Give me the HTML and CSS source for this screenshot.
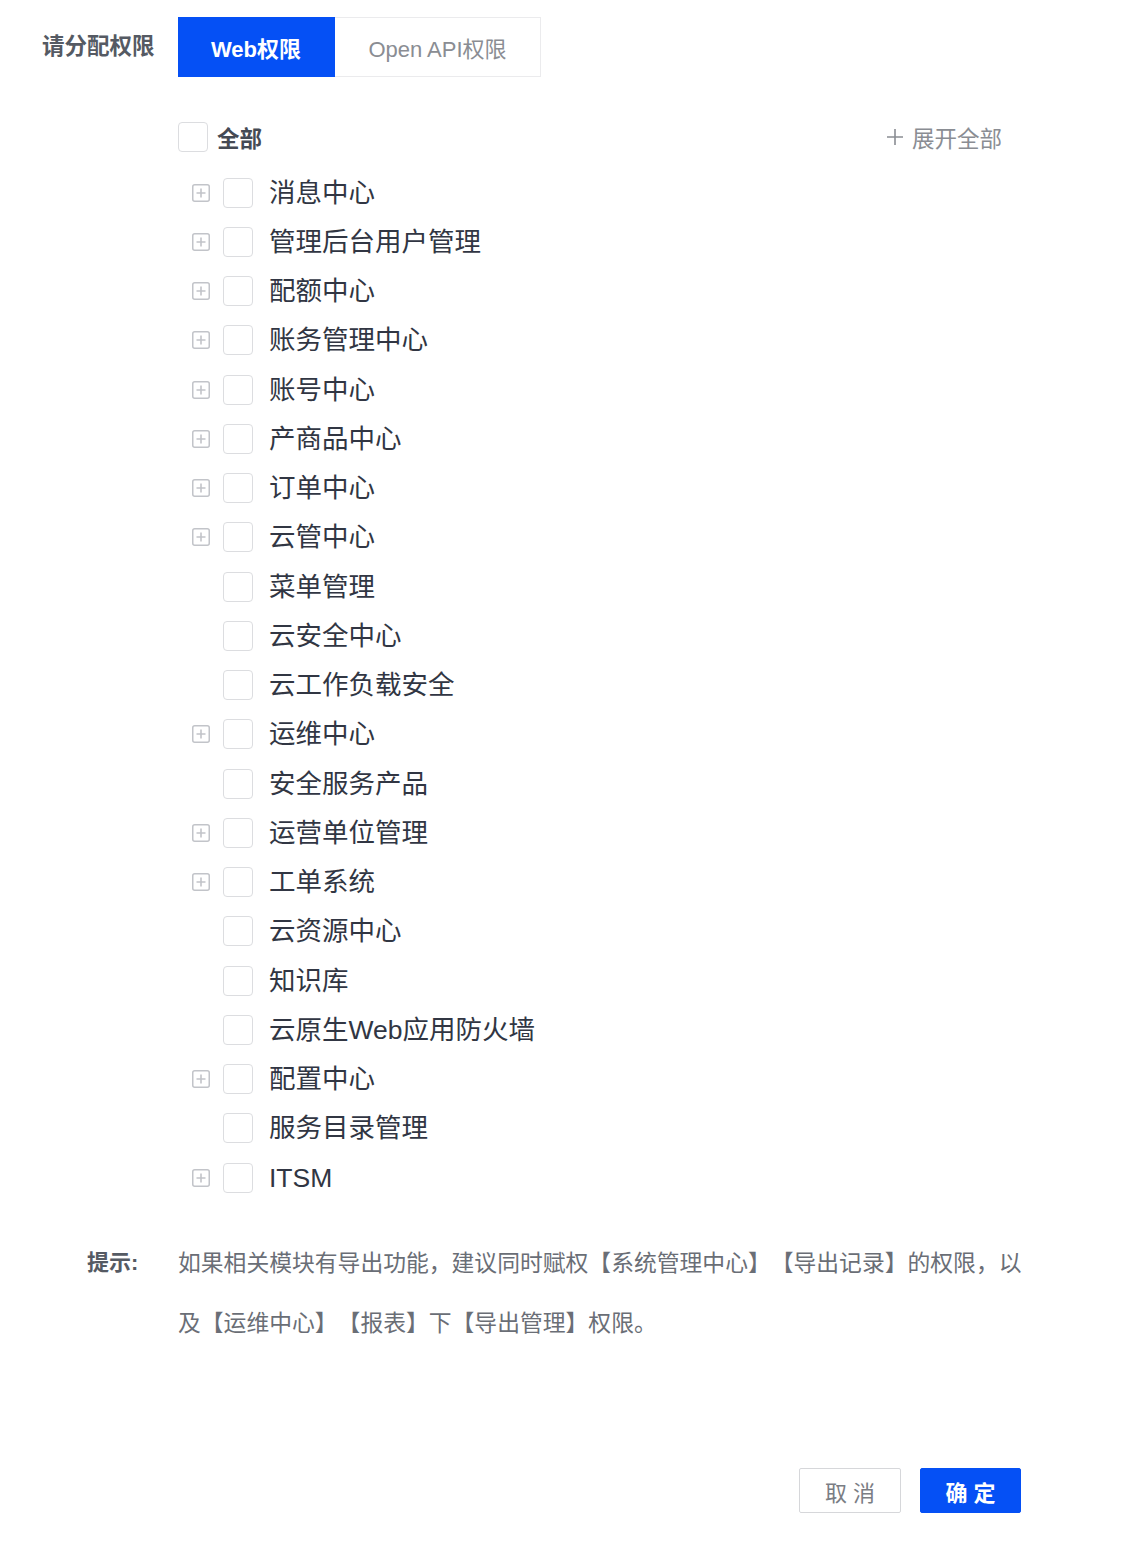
FILE: index.html
```html
<!DOCTYPE html>
<html lang="zh">
<head>
<meta charset="utf-8">
<link rel="stylesheet" href="styles.css">
</head>
<body>
<div class="page">
  <div class="head">
    <div class="head-label">请分配权限</div>
    <div class="tabs">
      <div class="tab active">Web权限</div>
      <div class="tab">Open API权限</div>
    </div>
  </div>

  <div class="tree">
    <div class="all-row">
      <div class="all-left"><span class="cb"></span><span class="all-text">全部</span></div>
      <div class="expand"><svg class="expand-plus" viewBox="0 0 18 18"><path d="M9 1v16M1 9h16" stroke="#8a8d93" stroke-width="1.6"/></svg>展开全部</div>
    </div>
    <div class="rows">
      <div class="row"><span class="pl"><svg viewBox="0 0 18 18"><rect x="0.75" y="0.75" width="16.5" height="16.5" rx="2" fill="none" stroke="#c2c4c9" stroke-width="1.5"/><path d="M9 4.5v9M4.5 9h9" stroke="#c2c4c9" stroke-width="1.6"/></svg></span><span class="cb"></span><span class="txt">消息中心</span></div>
      <div class="row"><span class="pl"><svg viewBox="0 0 18 18"><rect x="0.75" y="0.75" width="16.5" height="16.5" rx="2" fill="none" stroke="#c2c4c9" stroke-width="1.5"/><path d="M9 4.5v9M4.5 9h9" stroke="#c2c4c9" stroke-width="1.6"/></svg></span><span class="cb"></span><span class="txt">管理后台用户管理</span></div>
      <div class="row"><span class="pl"><svg viewBox="0 0 18 18"><rect x="0.75" y="0.75" width="16.5" height="16.5" rx="2" fill="none" stroke="#c2c4c9" stroke-width="1.5"/><path d="M9 4.5v9M4.5 9h9" stroke="#c2c4c9" stroke-width="1.6"/></svg></span><span class="cb"></span><span class="txt">配额中心</span></div>
      <div class="row"><span class="pl"><svg viewBox="0 0 18 18"><rect x="0.75" y="0.75" width="16.5" height="16.5" rx="2" fill="none" stroke="#c2c4c9" stroke-width="1.5"/><path d="M9 4.5v9M4.5 9h9" stroke="#c2c4c9" stroke-width="1.6"/></svg></span><span class="cb"></span><span class="txt">账务管理中心</span></div>
      <div class="row"><span class="pl"><svg viewBox="0 0 18 18"><rect x="0.75" y="0.75" width="16.5" height="16.5" rx="2" fill="none" stroke="#c2c4c9" stroke-width="1.5"/><path d="M9 4.5v9M4.5 9h9" stroke="#c2c4c9" stroke-width="1.6"/></svg></span><span class="cb"></span><span class="txt">账号中心</span></div>
      <div class="row"><span class="pl"><svg viewBox="0 0 18 18"><rect x="0.75" y="0.75" width="16.5" height="16.5" rx="2" fill="none" stroke="#c2c4c9" stroke-width="1.5"/><path d="M9 4.5v9M4.5 9h9" stroke="#c2c4c9" stroke-width="1.6"/></svg></span><span class="cb"></span><span class="txt">产商品中心</span></div>
      <div class="row"><span class="pl"><svg viewBox="0 0 18 18"><rect x="0.75" y="0.75" width="16.5" height="16.5" rx="2" fill="none" stroke="#c2c4c9" stroke-width="1.5"/><path d="M9 4.5v9M4.5 9h9" stroke="#c2c4c9" stroke-width="1.6"/></svg></span><span class="cb"></span><span class="txt">订单中心</span></div>
      <div class="row"><span class="pl"><svg viewBox="0 0 18 18"><rect x="0.75" y="0.75" width="16.5" height="16.5" rx="2" fill="none" stroke="#c2c4c9" stroke-width="1.5"/><path d="M9 4.5v9M4.5 9h9" stroke="#c2c4c9" stroke-width="1.6"/></svg></span><span class="cb"></span><span class="txt">云管中心</span></div>
      <div class="row"><span class="pl"></span><span class="cb"></span><span class="txt">菜单管理</span></div>
      <div class="row"><span class="pl"></span><span class="cb"></span><span class="txt">云安全中心</span></div>
      <div class="row"><span class="pl"></span><span class="cb"></span><span class="txt">云工作负载安全</span></div>
      <div class="row"><span class="pl"><svg viewBox="0 0 18 18"><rect x="0.75" y="0.75" width="16.5" height="16.5" rx="2" fill="none" stroke="#c2c4c9" stroke-width="1.5"/><path d="M9 4.5v9M4.5 9h9" stroke="#c2c4c9" stroke-width="1.6"/></svg></span><span class="cb"></span><span class="txt">运维中心</span></div>
      <div class="row"><span class="pl"></span><span class="cb"></span><span class="txt">安全服务产品</span></div>
      <div class="row"><span class="pl"><svg viewBox="0 0 18 18"><rect x="0.75" y="0.75" width="16.5" height="16.5" rx="2" fill="none" stroke="#c2c4c9" stroke-width="1.5"/><path d="M9 4.5v9M4.5 9h9" stroke="#c2c4c9" stroke-width="1.6"/></svg></span><span class="cb"></span><span class="txt">运营单位管理</span></div>
      <div class="row"><span class="pl"><svg viewBox="0 0 18 18"><rect x="0.75" y="0.75" width="16.5" height="16.5" rx="2" fill="none" stroke="#c2c4c9" stroke-width="1.5"/><path d="M9 4.5v9M4.5 9h9" stroke="#c2c4c9" stroke-width="1.6"/></svg></span><span class="cb"></span><span class="txt">工单系统</span></div>
      <div class="row"><span class="pl"></span><span class="cb"></span><span class="txt">云资源中心</span></div>
      <div class="row"><span class="pl"></span><span class="cb"></span><span class="txt">知识库</span></div>
      <div class="row"><span class="pl"></span><span class="cb"></span><span class="txt">云原生Web应用防火墙</span></div>
      <div class="row"><span class="pl"><svg viewBox="0 0 18 18"><rect x="0.75" y="0.75" width="16.5" height="16.5" rx="2" fill="none" stroke="#c2c4c9" stroke-width="1.5"/><path d="M9 4.5v9M4.5 9h9" stroke="#c2c4c9" stroke-width="1.6"/></svg></span><span class="cb"></span><span class="txt">配置中心</span></div>
      <div class="row"><span class="pl"></span><span class="cb"></span><span class="txt">服务目录管理</span></div>
      <div class="row"><span class="pl"><svg viewBox="0 0 18 18"><rect x="0.75" y="0.75" width="16.5" height="16.5" rx="2" fill="none" stroke="#c2c4c9" stroke-width="1.5"/><path d="M9 4.5v9M4.5 9h9" stroke="#c2c4c9" stroke-width="1.6"/></svg></span><span class="cb"></span><span class="txt">ITSM</span></div>
    </div>
  </div>

  <div class="hint">
    <div class="hint-label">提示:</div>
    <div class="hint-text">如果相关模块有导出功能，建议同时赋权【系统管理中心】【导出记录】的权限，以及【运维中心】【报表】下【导出管理】权限。</div>
  </div>

  <div class="actions">
    <button class="btn cancel">取 消</button>
    <button class="btn ok">确 定</button>
  </div>
</div>
</body>
</html>
```

FILE: styles.css
```css
html, body {
  margin: 0;
  padding: 0;
  background: #ffffff;
}
body {
  font-family: "Liberation Sans", "Noto Sans CJK SC", sans-serif;
  color: #333844;
  text-spacing-trim: space-all;
}
.page {
  width: 1132px;
  padding-top: 17px;
  box-sizing: border-box;
}
.head {
  display: flex;
  align-items: center;
}
.head-label {
  width: 136px;
  padding-left: 42px;
  font-size: 22.5px;
  font-weight: bold;
  color: #555a63;
  line-height: 60px;
}
.tabs {
  display: flex;
}
.tab {
  height: 60px;
  box-sizing: border-box;
  display: flex;
  align-items: center;
  justify-content: center;
  font-size: 22px;
  color: #8a8d93;
  border: 1.5px solid #ebebed;
  border-left: none;
  width: 206px;
}
.tab.active {
  width: 157px;
  background: #0550f5;
  border-color: #0550f5;
  color: #ffffff;
  font-weight: bold;
}
.tree {
  margin-left: 178px;
  width: 824px;
  margin-top: 45px;
}
.all-row {
  display: flex;
  justify-content: space-between;
  align-items: center;
  height: 30px;
}
.all-left {
  display: flex;
  align-items: center;
}
.all-text {
  margin-left: 9px;
  font-size: 22.5px;
  font-weight: bold;
  color: #454a54;
}
.expand {
  font-size: 22.5px;
  color: #8a8d93;
  display: flex;
  align-items: center;
}
.expand-plus {
  width: 18px;
  height: 18px;
  margin-right: 8px;
  display: block;
}
.cb {
  width: 30px;
  height: 30px;
  box-sizing: border-box;
  border: 1.5px solid #dcdde0;
  border-radius: 4px;
  background: #fff;
  flex: none;
}
.rows {
  margin-top: 16px;
}
.row {
  display: flex;
  align-items: center;
  height: 49.25px;
}
.pl {
  width: 18px;
  height: 18px;
  margin-left: 14px;
  margin-right: 13px;
  flex: none;
  display: block;
}
.pl svg {
  width: 18px;
  height: 18px;
  display: block;
}
.txt {
  margin-left: 16px;
  font-size: 26.5px;
  line-height: 30px;
  color: #313643;
  white-space: nowrap;
}
.hint {
  display: flex;
  margin-top: 31px;
}
.hint-label {
  width: 91px;
  padding-left: 87px;
  font-size: 22px;
  font-weight: bold;
  color: #555a63;
  line-height: 60px;
}
.hint-text {
  width: 850px;
  font-size: 22.8px;
  line-height: 60px;
  color: #6a6e76;
  text-spacing-trim: space-all;
}
.actions {
  display: flex;
  justify-content: flex-end;
  gap: 19px;
  width: 1021px;
  margin-top: 115px;
}
.btn {
  height: 45px;
  width: 102px;
  box-sizing: border-box;
  font-family: "Liberation Sans", "Noto Sans CJK SC", sans-serif;
  font-size: 22px;
  border-radius: 2px;
  padding: 0;
  cursor: pointer;
}
.btn.cancel {
  background: #fff;
  border: 1.5px solid #d6d7da;
  color: #7a7d84;
}
.btn.ok {
  width: 101px;
  background: #0550f5;
  border: 1.5px solid #0550f5;
  color: #fff;
  font-weight: bold;
}
```
